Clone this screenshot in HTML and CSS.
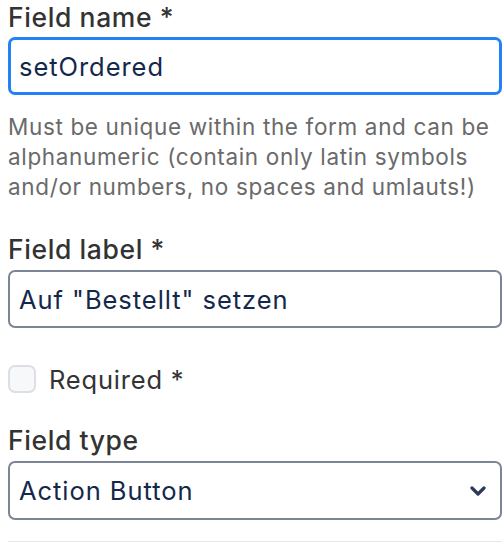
FILE: index.html
```html
<!DOCTYPE html>
<html>
<head>
<meta charset="utf-8">
<link rel="stylesheet" href="styles.css">
</head>
<body>
<form class="form">
  <div class="group g-name">
    <label class="label">Field name *</label>
    <div class="input focused">setOrdered</div>
    <p class="help">Must be unique within the form and can be alphanumeric (contain only latin symbols and/or numbers, no spaces and umlauts!)</p>
  </div>
  <div class="group g-label">
    <label class="label">Field label *</label>
    <div class="input">Auf "Bestellt" setzen</div>
  </div>
  <div class="check-row">
    <span class="checkbox"></span>
    <span class="check-label">Required *</span>
  </div>
  <div class="group g-type">
    <label class="label">Field type</label>
    <div class="input select">
      <span>Action Button</span>
      <svg class="chevron" width="16" height="12" viewBox="0 0 16 12"><path d="M2 3 L8 9 L14 3" fill="none" stroke="#2b3a55" stroke-width="3.2" stroke-linecap="round" stroke-linejoin="round"/></svg>
    </div>
  </div>
  <hr class="rule">
</form>
</body>
</html>
```
FILE: styles.css
```css
html, body {
  margin: 0;
  padding: 0;
  background: #fff;
  overflow: hidden;
}
body {
  font-family: Inter, "Noto Sans", sans-serif;
  width: 502px;
  height: 542px;
}
.form {
  padding: 0 0 0 8px;
  display: flex;
  flex-direction: column;
}
.group {
  display: flex;
  flex-direction: column;
}
.label {
  font-size: 26.5px;
  font-weight: 500;
  letter-spacing: 0.6px;
  color: #333333;
  line-height: 34px;
  height: 34px;
  margin-bottom: 3px;
}
.input {
  box-sizing: border-box;
  height: 58px;
  border: 2px solid #7b8596;
  border-radius: 7px;
  padding: 0 9px;
  display: flex;
  align-items: center;
  font-size: 25.5px;
  letter-spacing: 0.95px;
  color: #14284b;
  background: #fff;
}
.input.focused {
  border: 3px solid #2381f7;
  padding-left: 8px;
}
.help {
  margin: 17px 0 0 0;
  font-size: 22.5px;
  letter-spacing: 0.65px;
  line-height: 30px;
  color: #6a6a6a;
  padding-right: 4px;
}
.g-label { margin-top: 30px; }
.g-label .label { margin-bottom: 4px; }
.check-row {
  margin-top: 36px;
  display: flex;
  align-items: center;
  gap: 13px;
  height: 30px;
}
.checkbox {
  box-sizing: border-box;
  width: 28px;
  height: 28px;
  border: 2px solid #dcdfe4;
  background: #f7f8fa;
  border-radius: 7px;
}
.check-label {
  font-size: 25.5px;
  letter-spacing: 0.8px;
  color: #333333;
}
.g-type { margin-top: 29px; }
.g-type .label { margin-bottom: 4px; }
.select {
  height: 59px;
  justify-content: space-between;
  padding-right: 14px;
}
.chevron { display: block; }
.rule {
  margin: 21px 0 0 0;
  border: 0;
  border-top: 1px solid #e6e6e6;
}
```
